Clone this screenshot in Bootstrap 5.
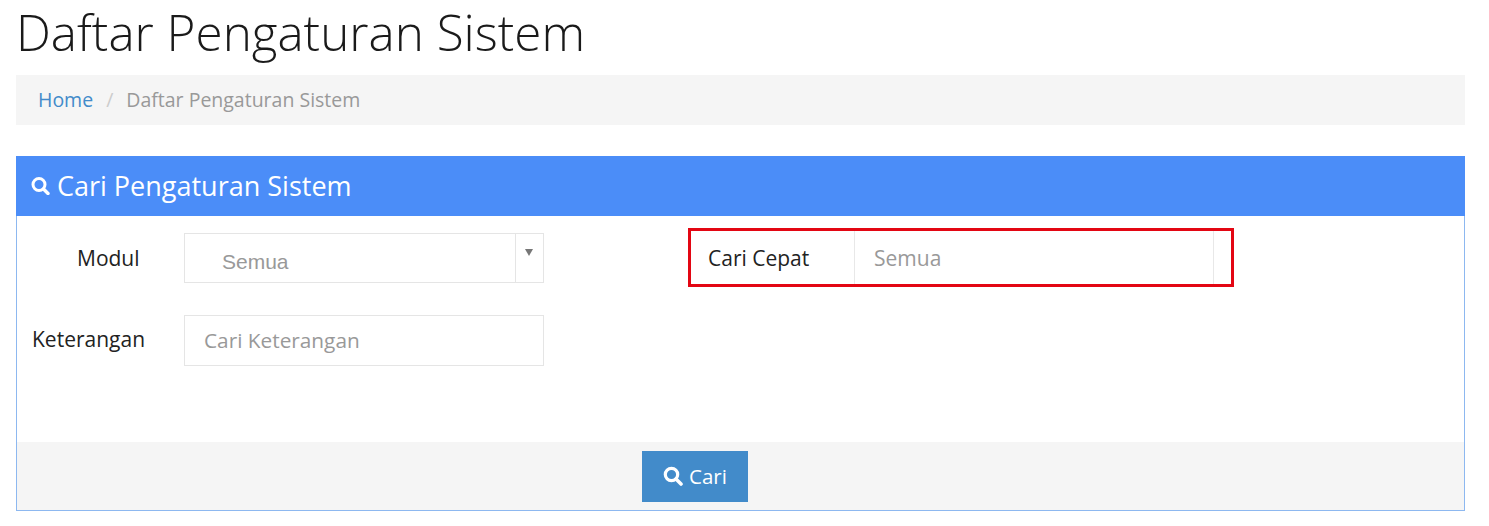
<!DOCTYPE html>
<html lang="id">
<head>
<meta charset="utf-8">
<title>Daftar Pengaturan Sistem</title>
<link href="https://cdn.jsdelivr.net/npm/bootstrap@5.3.0/dist/css/bootstrap.min.css" rel="stylesheet">
<style>
html,body{height:526px;overflow:hidden;background:#fff}
body{font-family:"Open Sans","Liberation Sans",sans-serif;color:#222;font-size:21px}
.page-wrap{padding:0 24px 0 16px}
.page-title{font-weight:300;font-size:49.4px;line-height:64px;margin:0 0 11px 0;color:#1a1a1a}
.crumbs{background:#f5f5f5;height:50px;margin:0 0 31px;padding:0 22px;font-size:19.5px;align-items:center}
.crumbs a{color:#428bca;text-decoration:none}
.crumbs .breadcrumb-item.active{color:#999}
.crumbs .breadcrumb-item+.breadcrumb-item{padding-left:13px}
.crumbs .breadcrumb-item+.breadcrumb-item::before{color:#ccc;padding-right:13px}
.search-panel{border:1px solid #8db8f0;border-radius:0;height:355px}
.search-head{background:#4b8df8;color:#fff;height:60px;font-size:27px;padding:0 15px;margin:-1px -1px 0;border:0;border-radius:0!important;gap:7px}
.search-body{padding:0 15px}
.label-col{width:152px;flex:none}
.field-box{width:360px;border:1px solid #e5e5e5;background:#fff;color:#999}
.select-box{height:50px;margin-top:17px;font-family:"Liberation Sans",sans-serif;font-size:21px;padding:12px 0 0 37px;line-height:32px}
.select-caret{width:28px;border-left:1px solid #e5e5e5;right:0;top:0;bottom:0}
.select-caret::after{content:"";position:absolute;left:9px;top:15px;border:4px solid transparent;border-top:7px solid #777;border-bottom:0}
.label-modul{padding:10px 0 0 45px;margin-top:17px}
.text-box{height:51px;margin-top:32px;padding:0 19px;font-size:20.8px;border-radius:0}
.text-box::placeholder{color:#999;opacity:1}
.quick-box{width:546px;height:59px;margin:12px 0 0 144px;border:3px solid #e30613;padding-left:17px}
.quick-label{width:146px;flex:none}
.quick-field{width:360px;border:solid #e8e8e8;border-width:0 1px;color:#999;padding-left:19px}
.search-foot{background:#f5f5f5;height:69px;margin-top:76px;padding:9px 0 0 625px;border:0;border-radius:0!important}
.find-btn{background:#428bca;color:#fff;border:0;border-radius:0;width:106px;height:51px;font-size:20.5px;gap:6px;padding:0}
.find-btn:hover{background:#3b7db6;color:#fff}
</style>
</head>
<body>
<div class="page-wrap">
  <h1 class="page-title">Daftar Pengaturan Sistem</h1>
  <nav aria-label="breadcrumb">
    <ol class="breadcrumb crumbs">
      <li class="breadcrumb-item"><a href="#">Home</a></li>
      <li class="breadcrumb-item active" aria-current="page">Daftar Pengaturan Sistem</li>
    </ol>
  </nav>
  <div class="card search-panel">
    <div class="card-header search-head d-flex align-items-center">
      <svg width="19" height="19" viewBox="0 0 19 19" fill="none" stroke="#fff" aria-hidden="true"><circle cx="8" cy="8.5" r="6" stroke-width="3"/><path d="M12.5 13l4.5 4.5" stroke-width="3.4" stroke-linecap="round"/></svg>
      <span>Cari Pengaturan Sistem</span>
    </div>
    <div class="search-body d-flex">
      <div>
        <div class="d-flex">
          <div class="label-col label-modul">Modul</div>
          <div class="field-box select-box position-relative">Semua<span class="select-caret position-absolute"></span></div>
        </div>
        <div class="d-flex align-items-center">
          <label class="label-col mt-4 pt-2" for="ket">Keterangan</label>
          <input id="ket" class="field-box text-box" type="text" placeholder="Cari Keterangan">
        </div>
      </div>
      <div class="quick-box d-flex align-items-stretch">
        <div class="quick-label d-flex align-items-center pt-1">Cari Cepat</div>
        <div class="quick-field d-flex align-items-center pt-1">Semua</div>
      </div>
    </div>
    <div class="card-footer search-foot">
      <button type="button" class="btn find-btn d-inline-flex align-items-center justify-content-center">
        <svg width="20" height="20" viewBox="0 0 20 20" fill="none" stroke="#fff" aria-hidden="true"><circle cx="8.5" cy="8.5" r="6.2" stroke-width="3.2"/><path d="M13 13l5 5" stroke-width="3.6" stroke-linecap="round"/></svg>
        Cari
      </button>
    </div>
  </div>
</div>
<script src="https://cdn.jsdelivr.net/npm/bootstrap@5.3.0/dist/js/bootstrap.bundle.min.js"></script>
</body>
</html>
